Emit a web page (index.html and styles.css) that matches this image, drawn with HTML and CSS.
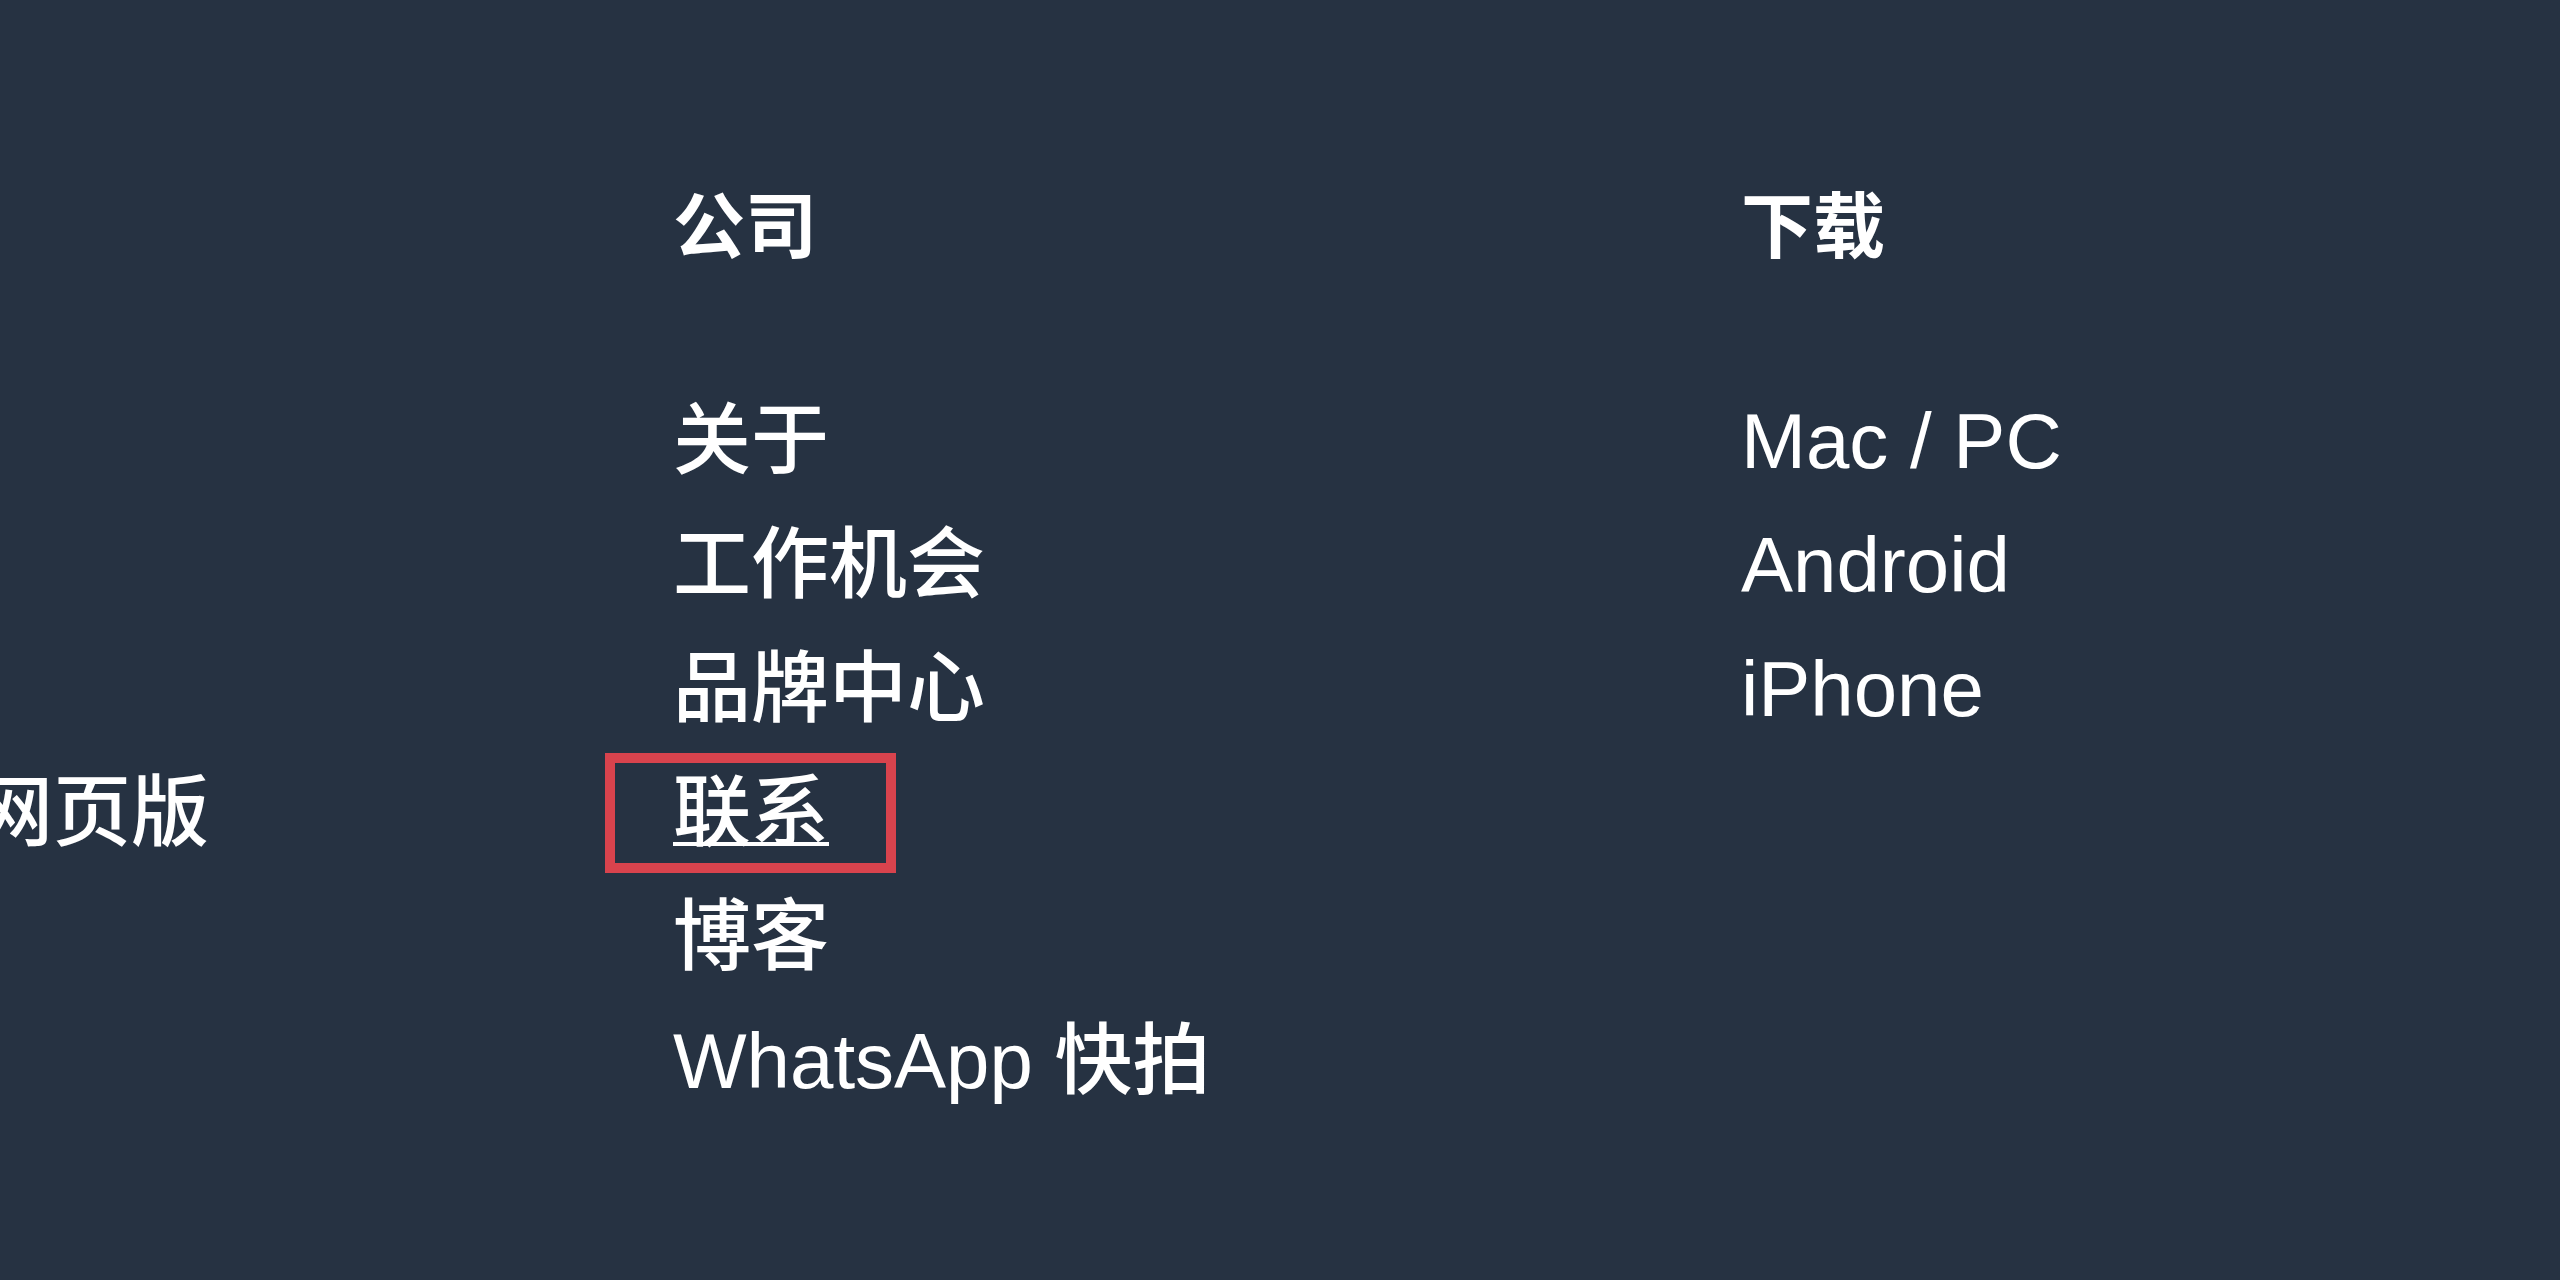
FILE: index.html
```html
<!DOCTYPE html>
<html lang="zh-CN">
<head>
<meta charset="utf-8">
<title>WhatsApp 页脚</title>
<link rel="stylesheet" href="styles.css">
</head>
<body>
<footer class="footer">
  <nav class="footer-cols">
    <section class="col col-first">
      <div class="col-title">&nbsp;</div>
      <ul class="links">
        <li>&nbsp;</li>
        <li>&nbsp;</li>
        <li>&nbsp;</li>
        <li><a href="#">WhatsApp 网页版</a></li>
      </ul>
    </section>
    <section class="col">
      <h2 class="col-title">公司</h2>
      <ul class="links">
        <li><a href="#">关于</a></li>
        <li><a href="#">工作机会</a></li>
        <li><a href="#">品牌中心</a></li>
        <li><a href="#" class="link-hover marked">联系</a></li>
        <li><a href="#">博客</a></li>
        <li><a href="#">WhatsApp 快拍</a></li>
      </ul>
    </section>
    <section class="col">
      <h2 class="col-title">下载</h2>
      <ul class="links">
        <li><a href="#">Mac / PC</a></li>
        <li><a href="#">Android</a></li>
        <li><a href="#">iPhone</a></li>
      </ul>
    </section>
  </nav>
</footer>
</body>
</html>
```

FILE: styles.css
```css
html, body {
  margin: 0;
  padding: 0;
  height: 100%;
  overflow: hidden;
}

body {
  background: #263242;
  color: #ffffff;
  font-family: "Liberation Sans", Arial, "Noto Sans CJK SC", sans-serif;
}

.footer {
  height: 1280px;
  overflow: hidden;
}

.footer-cols {
  display: flex;
  margin-left: -395px;
  padding-top: 184px;
}

.col {
  flex: 0 0 1068px;
  width: 1068px;
}

.col-first {
  flex-basis: 1068px;
  display: flex;
  flex-direction: column;
  align-items: flex-end;
  padding-right: 464px;
  box-sizing: border-box;
}

.col-title {
  margin: 0;
  font-size: 72px;
  line-height: 86px;
  font-weight: 700;
  white-space: nowrap;
}

.links {
  list-style: none;
  margin: 109px 0 0;
  padding: 0;
}

.col-first .links li {
  text-align: right;
}

.links li {
  font-size: 78px;
  line-height: 124px;
  font-weight: 500;
  white-space: nowrap;
}

.links a {
  color: #ffffff;
  text-decoration: none;
}

.links a.link-hover {
  text-decoration: underline;
  text-decoration-thickness: 4px;
}

.marked {
  position: relative;
  display: inline-block;
}

.marked::after {
  content: "";
  position: absolute;
  left: -68px;
  top: 2px;
  width: 291px;
  height: 120px;
  border: 10px solid #d8434d;
  box-sizing: border-box;
  pointer-events: none;
}
```
